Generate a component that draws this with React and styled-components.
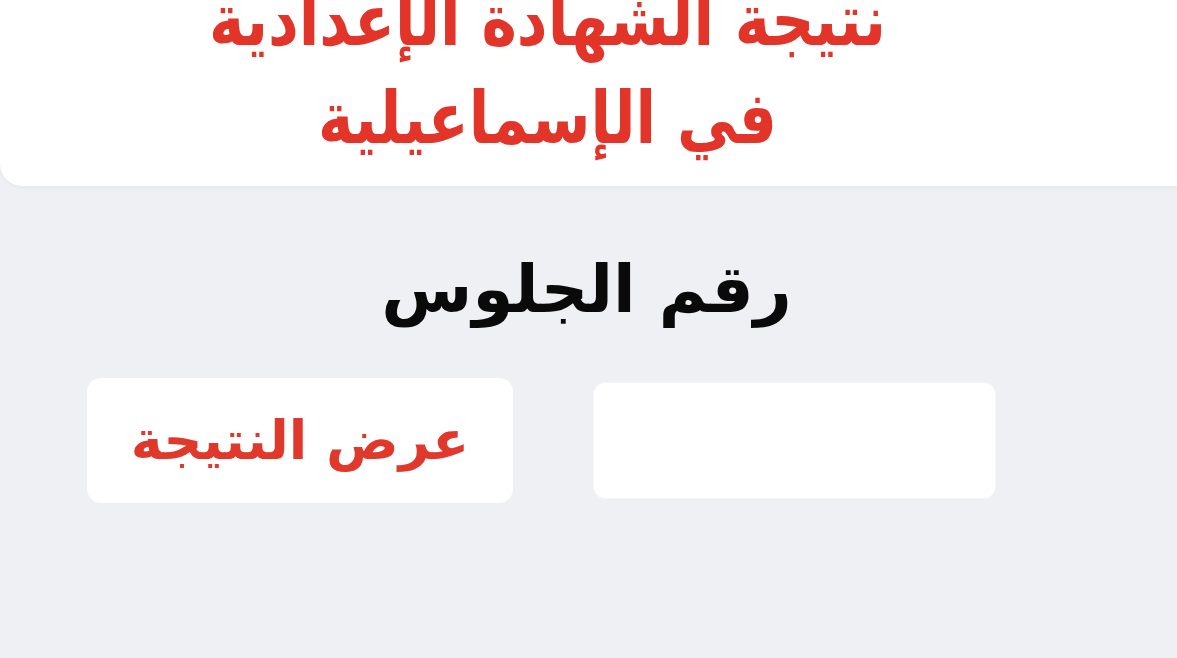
import React from "react";
import styled, { createGlobalStyle } from "styled-components";

const GlobalStyle = createGlobalStyle`
  html, body {
    margin: 0;
    padding: 0;
    background: #eff0f3;
    overflow: hidden;
  }
  body {
    font-family: "DejaVu Sans", "Noto Sans", sans-serif;
  }
`;

const Page = styled.div`
  width: 1177px;
  height: 658px;
  background: #eff0f3;
  display: flex;
  flex-direction: column;
  overflow: hidden;
`;

const Header = styled.header`
  height: 186px;
  flex-shrink: 0;
  background: #ffffff;
  border-bottom-left-radius: 22px;
  box-shadow: 0 2px 4px rgba(0, 0, 0, 0.04);
  display: flex;
  justify-content: center;
  overflow: hidden;
`;

const Title = styled.h1`
  margin: -10px 0 0 -82px;
  direction: rtl;
  text-align: center;
  color: #e3342a;
  font-weight: bold;
  font-size: 60px;
  line-height: 82px;
  letter-spacing: -1px;
  transform: scaleY(1.2);
`;

const Body = styled.main`
  display: flex;
  flex-direction: column;
  padding: 62px 0 0 87px;
  width: 909px;
`;

const Label = styled.h2`
  margin: 0;
  direction: rtl;
  text-align: center;
  padding-left: 90px;
  font-size: 66px;
  line-height: 84px;
  font-weight: bold;
  color: #0a0a0a;
`;

const Row = styled.div`
  display: flex;
  align-items: center;
  gap: 80px;
  margin-top: 46px;
`;

const ShowButton = styled.button`
  width: 426px;
  height: 125px;
  border: none;
  border-radius: 14px;
  background: #ffffff;
  color: #e0392c;
  font-family: "DejaVu Sans", sans-serif;
  font-size: 54px;
  font-weight: bold;
  direction: rtl;
  cursor: pointer;
`;

const SeatInput = styled.input`
  width: 403px;
  height: 117px;
  box-sizing: border-box;
  border: 1px solid #f4f5f7;
  border-radius: 12px;
  background: #ffffff;
  outline: none;
  font-size: 40px;
  text-align: center;
`;

export default function App() {
  return (
    <Page>
      <GlobalStyle />
      <Header>
        <Title>
          نتيجة الشهادة الإعدادية
          <br />
          في الإسماعيلية
        </Title>
      </Header>
      <Body>
        <Label>رقم الجلوس</Label>
        <Row>
          <ShowButton>عرض النتيجة</ShowButton>
          <SeatInput type="text" />
        </Row>
      </Body>
    </Page>
  );
}
